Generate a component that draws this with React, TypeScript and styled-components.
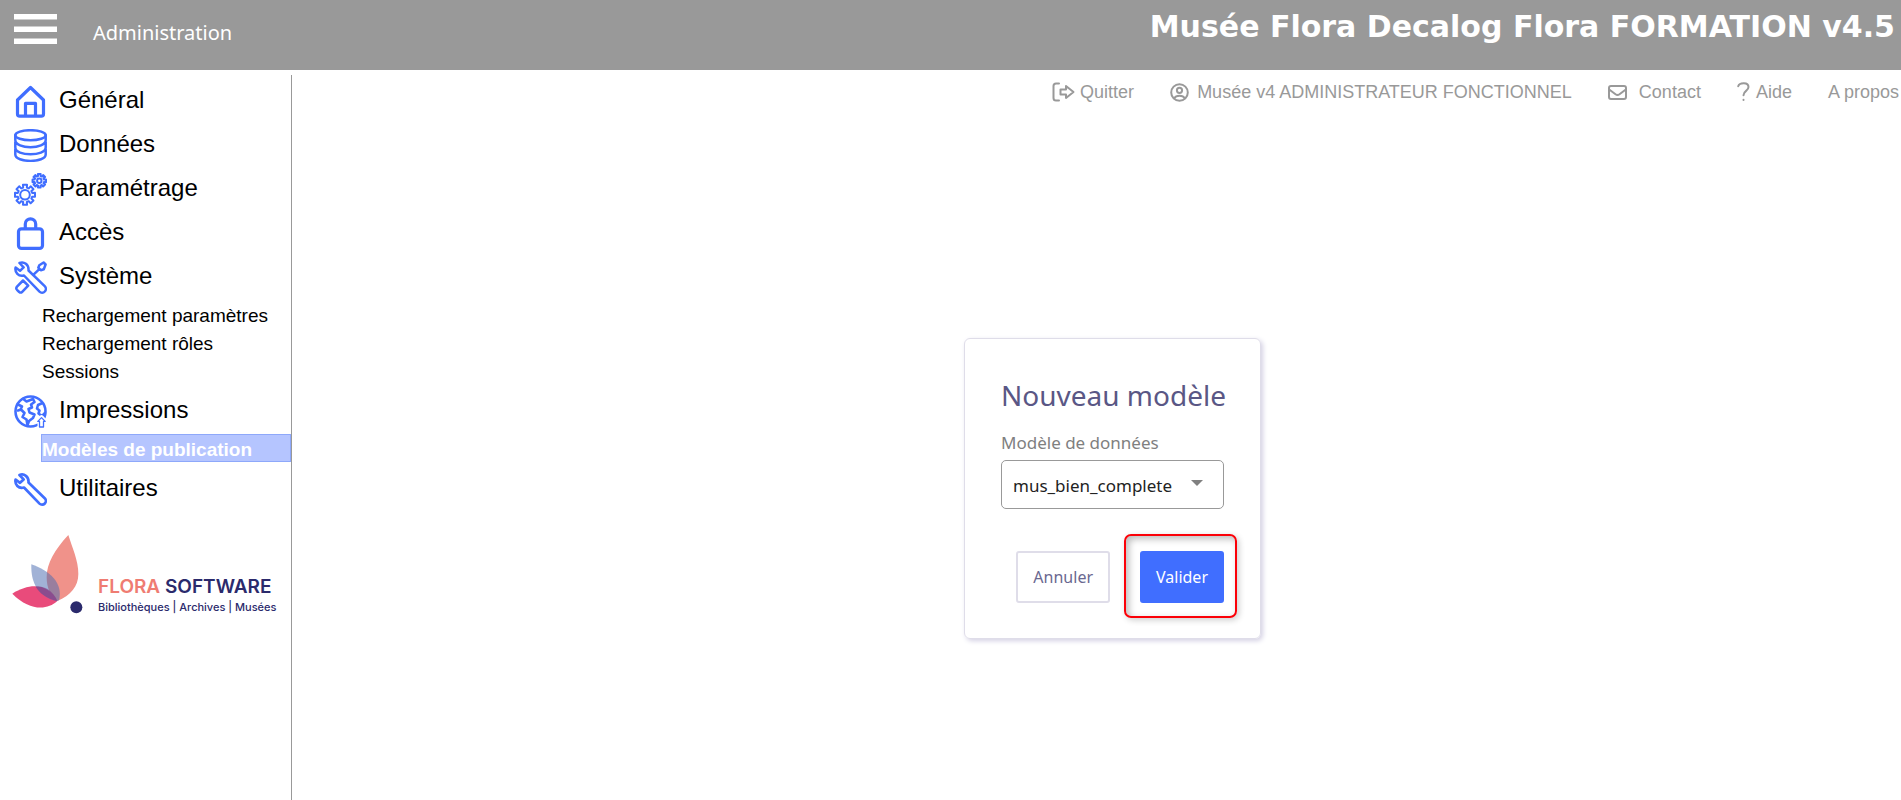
import React from 'react';
import styled, { createGlobalStyle, css } from 'styled-components';

const colors = {
  grey: '#999999',
  blue: '#406eff',
  border: '#dfdde9',
  heading: '#5a5785',
  navy: '#2b2a6c',
  salmon: '#ef7c72',
};

const sans = '"Liberation Sans", Arial, sans-serif';
const humanist = '"Segoe UI", "Noto Sans", sans-serif';

const GlobalStyle = createGlobalStyle`
  *, *::before, *::after { box-sizing: border-box; }
  body { margin: 0; background: #fff; color: #000; font-family: ${sans}; }
  a { color: inherit; text-decoration: none; }
  ul { list-style: none; margin: 0; padding: 0; }
`;

const Page = styled.div`
  display: flex;
  flex-direction: column;
  min-height: 100vh;
`;

const Header = styled.header`
  display: flex;
  align-items: flex-start;
  height: 70px;
  padding: 0 6px 0 14px;
  background: ${colors.grey};
  color: #fff;
`;

const MenuButton = styled.button`
  display: flex;
  margin: 14px 36px 0 0;
  padding: 0;
  border: 0;
  background: none;
  color: inherit;
  cursor: pointer;
`;

const Section = styled.span`
  flex: 1;
  margin-top: 19px;
  font: 400 20px/28px ${humanist};
`;

const AppTitle = styled.h1`
  margin: 5px 0 0;
  font: 700 30px/44px "DejaVu Sans", sans-serif;
  white-space: nowrap;
`;

const Body = styled.div`
  display: flex;
  flex: 1;
  padding-top: 5px;
`;

const Sidebar = styled.nav`
  flex: none;
  width: 292px;
  padding-top: 10px;
  border-right: 1px solid ${colors.grey};
`;

const Group = styled.li`
  margin-bottom: 11px;
`;

const GroupLink = styled.a`
  display: flex;
  gap: 12px;
  height: 33px;
  padding-left: 14px;
  font-size: 24px;
  line-height: 30px;
`;

const SubList = styled.ul`
  margin: 6px 0 0 41px;
`;

const SubLink = styled.a<{ $active?: boolean }>`
  display: block;
  padding-top: 3px;
  border: 1px solid transparent;
  font-size: 19px;
  line-height: 23px;
  ${(p) =>
    p.$active &&
    css`
      border-color: #8ea8fa;
      background: #b5c5ff;
      color: #fff;
      font-weight: 700;
    `}
`;

const Logo = styled.a`
  display: flex;
  gap: 15px;
  margin: 29px 0 0 12px;
`;

const LogoText = styled.span`
  display: flex;
  flex-direction: column;
  padding-top: 40px;
  color: ${colors.navy};
  font-family: Inter, sans-serif;
  white-space: nowrap;
`;

const LogoName = styled.span`
  font-size: 19px;
  font-weight: 600;
  line-height: 24px;
`;

const LogoAccent = styled.span`
  color: ${colors.salmon};
`;

const LogoTagline = styled.span`
  font-size: 11px;
  font-weight: 500;
  line-height: 16px;
`;

const Content = styled.div`
  display: flex;
  flex: 1;
  flex-direction: column;
`;

const TopLinks = styled.div`
  display: flex;
  justify-content: flex-end;
  align-items: center;
  gap: 36px;
  height: 34px;
  padding-right: 2px;
  color: ${colors.grey};
  font-size: 18px;
  line-height: 34px;
  white-space: nowrap;
`;

const TopLink = styled.a<{ $gap?: number }>`
  display: flex;
  align-items: center;
  gap: ${(p) => p.$gap ?? 6}px;
`;

const Main = styled.main`
  display: flex;
  flex: 1;
  align-items: center;
  justify-content: center;
  padding: 68px 0 0 32px;
`;

const Card = styled.form`
  width: 297px;
  padding: 34px 36px 35px 36px;
  border: 1px solid ${colors.border};
  border-radius: 6px;
  box-shadow: 2px 2px 5px #d4d1e4;
  font-family: ${humanist};
  font-size: 16px;
`;

const CardTitle = styled.h2`
  margin: 0 0 15px;
  color: ${colors.heading};
  font-size: 28px;
  font-weight: 400;
  line-height: 44px;
  white-space: nowrap;
`;

const Field = styled.label`
  display: block;
  color: #808080;
  font-size: 17px;
  line-height: 22px;
`;

const SelectBox = styled.span`
  display: grid;
  align-items: center;
  margin-top: 6px;
`;

const Select = styled.select`
  grid-area: 1 / 1;
  width: 100%;
  height: 49px;
  padding: 2px 32px 0 11px;
  border: 1px solid ${colors.grey};
  border-radius: 5px;
  appearance: none;
  background: #fff;
  color: #222;
  font: inherit;
`;

const Caret = styled.svg`
  grid-area: 1 / 1;
  justify-self: end;
  margin: 0 21px 4px 0;
  pointer-events: none;
`;

const Actions = styled.div`
  display: flex;
  justify-content: flex-end;
  gap: 30px;
  margin-top: 42px;
`;

const Button = styled.button<{ $primary?: boolean }>`
  height: 52px;
  padding: 0 ${(p) => (p.$primary ? 14 : 15)}px;
  border: 2px solid ${(p) => (p.$primary ? colors.blue : colors.border)};
  border-radius: 3px;
  background: ${(p) => (p.$primary ? colors.blue : '#fff')};
  color: ${(p) => (p.$primary ? '#fff' : '#6a6890')};
  font: inherit;
`;

const Highlight = styled.span`
  position: relative;
  display: flex;

  &::after {
    content: '';
    position: absolute;
    inset: -17px -13px -15px -16px;
    border: 2px solid #fb0007;
    border-radius: 7px;
    box-shadow: 2px 2px 6px #0003, inset 3px 3px 7px #0004;
    pointer-events: none;
  }
`;

const gearPath = (cx: number, cy: number, outer: number, inner: number) => {
  const points: string[] = [];
  for (let i = 0; i < 8; i++) {
    const mid = (i * Math.PI) / 4;
    const corners: [number, number][] = [
      [-0.25, inner],
      [-0.2, outer],
      [0.2, outer],
      [0.25, inner],
    ];
    corners.forEach(([offset, r]) => {
      const a = mid + offset;
      points.push(`${(cx + r * Math.cos(a)).toFixed(2)} ${(cy + r * Math.sin(a)).toFixed(2)}`);
    });
  }
  return `M${points.join('L')}Z`;
};

const WRENCH =
  'M5.5 2C10 .2 15 3.5 14.5 9.5L30.7 25.2A3.7 3.7 0 0 1 25.5 30.6L10 14.5C4.5 16 .5 11.5 1.6 6.5L6 9.8L9.6 6.4Z';

const NavIcon = ({ width = 2.7, children }: { width?: number; children: React.ReactNode }) => (
  <svg
    width="33"
    height="33"
    viewBox="0 0 33 33"
    fill="none"
    stroke={colors.blue}
    strokeWidth={width}
    strokeLinecap="round"
    strokeLinejoin="round"
    aria-hidden="true"
  >
    {children}
  </svg>
);

const HomeIcon = () => (
  <NavIcon width={3.2}>
    <path d="M16.5 2.5L3.5 15V29Q3.5 31.2 5.7 31.2H27.3Q29.5 31.2 29.5 29V15ZM11.5 31V18.3H21.5V31" />
  </NavIcon>
);

const DatabaseIcon = () => (
  <NavIcon width={2.5}>
    <ellipse cx="16.5" cy="6.2" rx="15.2" ry="5" />
    <path d="M1.3 6.2V11C1.3 20.5 31.7 20.5 31.7 11V6.2M1.3 13V18.5C1.3 27.5 31.7 27.5 31.7 18.5V13M1.3 20V25.5C1.3 34 31.7 34 31.7 25.5V20" />
  </NavIcon>
);

const GearsIcon = () => (
  <NavIcon width={2}>
    <path d={gearPath(11, 21.8, 10.2, 7.4)} />
    <circle cx="11" cy="21.8" r="4.8" />
    <path d={gearPath(25.3, 7.8, 6.9, 4.9)} />
    <circle cx="25.3" cy="7.8" r="2.2" />
  </NavIcon>
);

const LockIcon = () => (
  <NavIcon width={3.2}>
    <rect x="4.5" y="11.8" width="24" height="19.6" rx="3" />
    <path d="M11.3 11.5V7C11.3 .2 21.7 .2 21.7 7V11.5" />
  </NavIcon>
);

const ToolsIcon = () => (
  <NavIcon width={2.5}>
    <path d={WRENCH} />
    <path d="M25.3 4.2L29.6 1.5L31.6 3.5L29.8 8.2L26.8 9.2L24.3 6.7ZM25.6 7.8L19.5 13.7" />
    <path d="M9 19.5L3 25.6Q1.6 27.2 3 28.8L5.2 31Q6.8 32.2 8.2 30.8L14.2 24.6Z" />
  </NavIcon>
);

const GlobeIcon = () => (
  <NavIcon width={2.6}>
    <circle cx="16.5" cy="16.5" r="15" />
    <path d="M9 3.8L12.5 6.5L19 4L20.5 7L17 9.5L18 12.5L14.5 14L15.5 17.5L20.5 19.5L19 23L15 26L13.5 30M13.5 30L12.5 24.5L8.5 22L10.5 18L7 14.5L4 15.5M4 9.5L8 11.5L6.5 14.5M28.5 8L24 10L23 13.5L25.5 15.5L24.5 18.5L28 21L31 18" />
    <path d="M27.5 22L31.4 26.4H29.5V32H25.5V26.4H23.6Z" fill="#fff" stroke="#fff" strokeWidth="4" />
    <path d="M27.5 22.6L31.2 26.4H29.5V32H25.5V26.4H23.8Z" fill="#fff" strokeWidth="1.3" />
  </NavIcon>
);

const WrenchIcon = () => (
  <NavIcon>
    <path d={WRENCH} />
  </NavIcon>
);

const LogoMark = () => (
  <svg width="71" height="80" viewBox="36 45 213 240" aria-hidden="true">
    <path d="M205 45C165 88 140 130 140 172C140 205 153 230 172 243C212 226 235 200 235 162C235 122 217 84 205 45Z" fill="#f0928a" />
    <path d="M37 221C90 188 145 190 172 243C140 272 88 272 37 221Z" fill="#e94b7b" />
    <path d="M94 133C150 152 190 190 177 241L170 244C116 230 92 192 94 133Z" fill="#4a6bb0" fillOpacity="0.52" />
    <path d="M107 200C132 196 158 210 172 243C142 235 119 221 107 200Z" fill="#7d3c86" fillOpacity="0.5" />
    <circle cx="229" cy="262" r="18" fill={colors.navy} />
  </svg>
);

const LinkIcon = ({ w, h, children }: { w: number; h: number; children: React.ReactNode }) => (
  <svg
    width={w}
    height={h}
    viewBox={`0 0 ${w} ${h}`}
    fill="none"
    stroke="currentColor"
    strokeWidth="2"
    strokeLinecap="round"
    strokeLinejoin="round"
    aria-hidden="true"
  >
    {children}
  </svg>
);

const menu: {
  label: string;
  Icon: React.ComponentType;
  items?: { label: string; active?: boolean }[];
}[] = [
  { label: 'Général', Icon: HomeIcon },
  { label: 'Données', Icon: DatabaseIcon },
  { label: 'Paramétrage', Icon: GearsIcon },
  { label: 'Accès', Icon: LockIcon },
  {
    label: 'Système',
    Icon: ToolsIcon,
    items: [{ label: 'Rechargement paramètres' }, { label: 'Rechargement rôles' }, { label: 'Sessions' }],
  },
  { label: 'Impressions', Icon: GlobeIcon, items: [{ label: 'Modèles de publication', active: true }] },
  { label: 'Utilitaires', Icon: WrenchIcon },
];

export default function App() {
  return (
    <Page>
      <GlobalStyle />
      <Header>
        <MenuButton type="button" aria-label="Menu">
          <svg width="43" height="31" viewBox="0 0 43 31" fill="currentColor" aria-hidden="true">
            <path d="M0 0H43V5.5H0ZM0 12.5H43V18H0ZM0 24.5H43V30H0Z" />
          </svg>
        </MenuButton>
        <Section>Administration</Section>
        <AppTitle>Musée Flora Decalog Flora FORMATION v4.5</AppTitle>
      </Header>
      <Body>
        <Sidebar>
          <ul>
            {menu.map(({ label, Icon, items }) => (
              <Group key={label}>
                <GroupLink href="#">
                  <Icon />
                  {label}
                </GroupLink>
                {items && (
                  <SubList>
                    {items.map((item) => (
                      <li key={item.label}>
                        <SubLink href="#" $active={item.active}>
                          {item.label}
                        </SubLink>
                      </li>
                    ))}
                  </SubList>
                )}
              </Group>
            ))}
          </ul>
          <Logo href="#">
            <LogoMark />
            <LogoText>
              <LogoName>
                <LogoAccent>FLORA</LogoAccent> SOFTWARE
              </LogoName>
              <LogoTagline>Bibliothèques | Archives | Musées</LogoTagline>
            </LogoText>
          </Logo>
        </Sidebar>
        <Content>
          <TopLinks>
            <TopLink href="#" $gap={5}>
              <LinkIcon w={23} h={20}>
                <path d="M7 1.5H4Q1.5 1.5 1.5 4V16Q1.5 18.5 4 18.5H7" />
                <path d="M8.5 7.5H14V4L21.5 10L14 16V12.5H8.5Z" />
              </LinkIcon>
              Quitter
            </TopLink>
            <TopLink href="#" $gap={8}>
              <LinkIcon w={19} h={19}>
                <circle cx="9.5" cy="9.5" r="8.3" />
                <circle cx="9.5" cy="7.3" r="2.6" />
                <path d="M4.3 15.3C6 12 13 12 14.7 15.3" />
              </LinkIcon>
              Musée v4 ADMINISTRATEUR FONCTIONNEL
            </TopLink>
            <TopLink href="#" $gap={12}>
              <LinkIcon w={19} h={15}>
                <rect x="1" y="1" width="17" height="13" rx="2" />
                <path d="M1.2 4.5L7.5 9.3Q9.5 10.7 11.5 9.3L17.8 4.5" />
              </LinkIcon>
              Contact
            </TopLink>
            <TopLink href="#">
              <LinkIcon w={13} h={20}>
                <path d="M1.2 4.2C2.5 .2 11.5 -.2 11.5 5C11.5 9 6.5 8.8 6.5 13.2M6.5 17.8V18" />
              </LinkIcon>
              Aide
            </TopLink>
            <TopLink href="#">A propos</TopLink>
          </TopLinks>
          <Main>
            <Card onSubmit={(e) => e.preventDefault()}>
              <CardTitle>Nouveau modèle</CardTitle>
              <Field>
                Modèle de données
                <SelectBox>
                  <Select defaultValue="mus_bien_complete">
                    <option>mus_bien_complete</option>
                  </Select>
                  <Caret width="12" height="6" viewBox="0 0 12 6" aria-hidden="true">
                    <path d="M0 0H12L6 6Z" fill="#808080" />
                  </Caret>
                </SelectBox>
              </Field>
              <Actions>
                <Button type="button">Annuler</Button>
                <Highlight>
                  <Button type="submit" $primary>
                    Valider
                  </Button>
                </Highlight>
              </Actions>
            </Card>
          </Main>
        </Content>
      </Body>
    </Page>
  );
}
